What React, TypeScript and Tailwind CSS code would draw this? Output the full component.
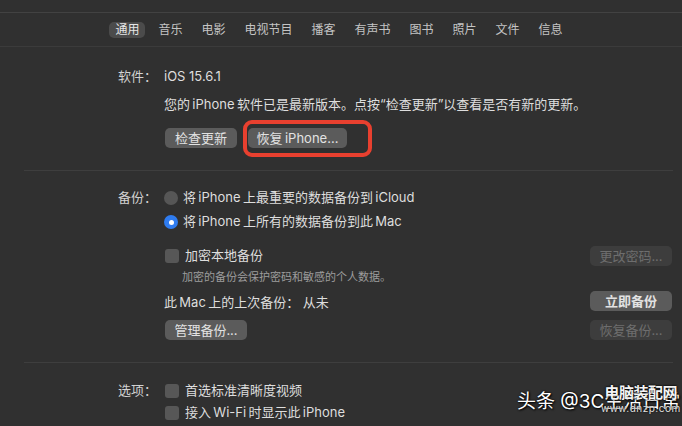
import React from 'react';

const tabs = ['通用', '音乐', '电影', '电视节目', '播客', '有声书', '图书', '照片', '文件', '信息'];

// thin space, like the auto spacing macOS puts between CJK and Latin text
const s = '\u2009';

const Button = ({ children, disabled, strong, className = '' }: { children: React.ReactNode; disabled?: boolean; strong?: boolean; className?: string }) => (
  <div
    className={
      'h-[20px] flex items-center justify-center rounded-[5px] text-[13px] leading-none ' +
      (disabled ? 'bg-[#3d3d3d] text-[#6e6e6e] ' : 'bg-[#5b5b5b] text-[#e2e2e2] ') +
      (strong ? 'font-semibold ' : '') +
      className
    }
  >
    {children}
  </div>
);

const Radio = ({ checked }: { checked?: boolean }) =>
  checked ? (
    <span className="w-[14px] h-[14px] rounded-full bg-[#2f7cf0] flex items-center justify-center shrink-0">
      <span className="w-[5px] h-[5px] rounded-full bg-white" />
    </span>
  ) : (
    <span className="w-[14px] h-[14px] rounded-full bg-[#565656] shrink-0" />
  );

const Checkbox = () => <span className="w-[14px] h-[14px] rounded-[3px] bg-[#575757] shrink-0" />;

const Label = ({ children }: { children: React.ReactNode }) => (
  <div className="w-[164px] shrink-0 pl-[118px] text-[13px] text-[#d2d2d2]">{children}</div>
);

const Separator = () => <div className="ml-[24px] mr-[9px] h-px bg-[#3e3e3e]" />;

export default function App() {
  return (
    <div
      className="relative w-[682px] h-[426px] overflow-hidden bg-[#303030] text-[#dedede]"
      style={{ fontFamily: 'Inter, "Noto Sans CJK SC", sans-serif' }}
    >
      <div className="h-[13px] border-b border-[#424242]" />
      <div className="h-[34px] border-b border-[#3b3b3b] flex items-center justify-center pr-1 gap-[7px]">
        {tabs.map((t, i) => (
          <div
            key={t}
            className={
              'h-[16px] px-1.5 flex items-center rounded-[5px] text-[12px] leading-none ' +
              (i === 0 ? 'bg-[#4b4b4b] text-[#e6e6e6]' : 'text-[#c4c4c4]')
            }
          >
            {t}
          </div>
        ))}
      </div>

      {/* 软件 */}
      <div className="flex mt-[20px]">
        <Label>
          <div className="h-[20px] flex items-center">软件：</div>
        </Label>
        <div className="flex-1 flex flex-col">
          <div className="h-[20px] flex items-center text-[13px]">iOS 15.6.1</div>
          <div className="h-[20px] mt-[8px] flex items-center text-[13px] whitespace-nowrap">
            {`您的${s}iPhone${s}软件已是最新版本。点按“检查更新”以查看是否有新的更新。`}
          </div>
          <div className="mt-[13px] flex items-center">
            <Button className="w-[72px] ml-px">检查更新</Button>
            <div className="relative ml-[11px]">
              <Button className="w-[99px]">{`恢复${s}iPhone...`}</Button>
              <div className="absolute left-[-5px] top-[-8px] w-[129px] h-[37px] rounded-[9px] border-[4px] border-[#e8402f]" />
            </div>
          </div>
        </div>
      </div>
      <div className="mt-[22px]">
        <Separator />
      </div>

      {/* 备份 */}
      <div className="flex mt-[17px]">
        <Label>
          <div className="h-[20px] flex items-center">备份：</div>
        </Label>
        <div className="flex-1 flex flex-col pr-[10px]">
          <div className="h-[20px] flex items-center gap-[5px] text-[13px]">
            <Radio />
            {`将${s}iPhone${s}上最重要的数据备份到${s}iCloud`}
          </div>
          <div className="h-[20px] mt-[4px] flex items-center gap-[5px] text-[13px]">
            <Radio checked />
            {`将${s}iPhone${s}上所有的数据备份到此${s}Mac`}
          </div>
          <div className="h-[20px] mt-[14px] flex items-center justify-between">
            <div className="flex items-center gap-[6px] text-[13px] ml-px">
              <Checkbox />
              加密本地备份
            </div>
            <Button disabled className="w-[82px]">更改密码...</Button>
          </div>
          <div className="h-[16px] mt-[3px] pl-[18px] flex items-center text-[11px] text-[#9c9c9c]">
            加密的备份会保护密码和敏感的个人数据。
          </div>
          <div className="h-[20px] mt-[6px] flex items-center justify-between">
            <div className="text-[13px] pt-[4px]">{`此${s}Mac${s}上的上次备份：`}&nbsp;从未</div>
            <Button strong className="w-[82px]">立即备份</Button>
          </div>
          <div className="h-[20px] mt-[9px] flex items-center justify-between">
            <Button className="w-[82px] ml-px">管理备份...</Button>
            <Button disabled className="w-[82px]">恢复备份...</Button>
          </div>
        </div>
      </div>
      <div className="mt-[22px]">
        <Separator />
      </div>

      {/* 选项 */}
      <div className="flex mt-[18px]">
        <Label>
          <div className="h-[20px] flex items-center">选项：</div>
        </Label>
        <div className="flex-1 flex flex-col">
          <div className="h-[20px] flex items-center gap-[6px] text-[13px] ml-px">
            <Checkbox />
            首选标准清晰度视频
          </div>
          <div className="h-[20px] mt-[2px] flex items-center gap-[6px] text-[13px] ml-px">
            <Checkbox />
            {`接入${s}Wi-Fi${s}时显示此${s}iPhone`}
          </div>
        </div>
      </div>

      {/* watermark */}
      <div className="absolute left-[517px] top-[392px] text-[19px] leading-none text-white [text-shadow:0_0_2px_#000,1px_1px_2px_#000] whitespace-nowrap">
        头条 @3C生活日常
      </div>
      <div className="absolute left-[601px] top-[385px] flex flex-col items-center leading-none">
        <div className="text-[15px] font-semibold text-[#f4f4f4] tracking-[-0.5px] [text-shadow:0_0_2px_#000,0_0_2px_#000]">电脑装配网</div>
        <div className="mt-[3px] text-[10px] text-[#e0e0e0] tracking-[0.5px] [text-shadow:0_0_2px_#000]">www.dnzp.com</div>
      </div>
    </div>
  );
}
